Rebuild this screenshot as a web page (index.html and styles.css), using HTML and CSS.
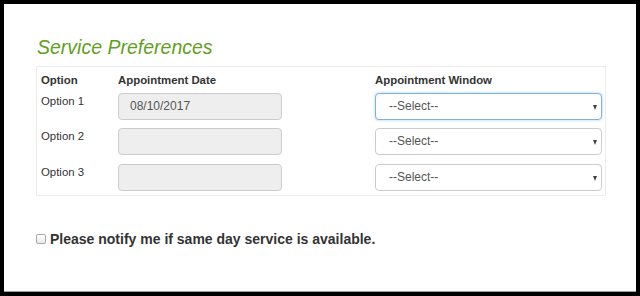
FILE: index.html
```html
<!DOCTYPE html>
<html lang="en">
<head>
<meta charset="utf-8">
<title>Service Preferences</title>
<link rel="stylesheet" href="styles.css">
</head>
<body>
<div class="frame">
  <div class="page">
    <h2 class="title">Service Preferences</h2>
    <div class="prefs">
      <div class="cell head c1">Option</div>
      <div class="cell head c2">Appointment Date</div>
      <div class="cell head c3">Appointment Window</div>

      <div class="cell c1 label">Option 1</div>
      <div class="cell c2"><div class="field">08/10/2017</div></div>
      <div class="cell c3"><div class="select focus"><span class="sel-text">--Select--</span><span class="caret"></span></div></div>

      <div class="cell c1 label">Option 2</div>
      <div class="cell c2"><div class="field"></div></div>
      <div class="cell c3"><div class="select"><span class="sel-text">--Select--</span><span class="caret"></span></div></div>

      <div class="cell c1 label">Option 3</div>
      <div class="cell c2"><div class="field"></div></div>
      <div class="cell c3"><div class="select"><span class="sel-text">--Select--</span><span class="caret"></span></div></div>
    </div>
    <label class="notify"><span class="box"></span>Please notify me if same day service is available.</label>
  </div>
</div>
</body>
</html>
```

FILE: styles.css
```css
html, body {
  margin: 0;
  padding: 0;
  background: #000;
}
.frame {
  box-sizing: border-box;
  width: 640px;
  height: 296px;
  border: 4px solid #000;
  background: #fff;
  font-family: "Liberation Sans", Arial, sans-serif;
  color: #333;
}
.page {
  box-sizing: border-box;
  height: 288px;
  padding: 31px 30px 0 32px;
  border-bottom: 1px solid #9a9a9a;
}
.title {
  margin: 0 0 7px 1px;
  font-size: 19.5px;
  line-height: 24px;
  font-weight: normal;
  font-style: italic;
  color: #5f9f22;
}
.prefs {
  display: grid;
  grid-template-columns: 76px 257px 1fr;
  width: 570px;
  box-sizing: border-box;
  border: 1px solid #ececec;
}
.cell {
  font-size: 11.4px;
  line-height: 17px;
  padding: 4px 3px 4.3px 5px;
}
.c1 { padding-left: 4px; }
.head {
  font-weight: bold;
  padding-top: 5px;
  padding-bottom: 0;
}
.field {
  box-sizing: border-box;
  width: 164px;
  height: 27px;
  border: 1px solid #ccc;
  border-radius: 4px;
  background: #eee;
  color: #555;
  font-size: 12px;
  line-height: 25px;
  padding-left: 11px;
}
.select {
  position: relative;
  box-sizing: border-box;
  width: 227px;
  height: 27px;
  border: 1px solid #ccc;
  border-radius: 4px;
  background: #fff;
  color: #555;
  font-size: 12px;
  line-height: 25px;
  padding-left: 13px;
}
.select.focus {
  border-color: #7eb2dc;
  box-shadow: 0 0 3px rgba(102, 175, 233, 0.6);
}
.caret {
  position: absolute;
  right: 4px;
  top: 11px;
  width: 0;
  height: 0;
  border-left: 2.5px solid transparent;
  border-right: 2.5px solid transparent;
  border-top: 5px solid #444;
}
.notify {
  display: flex;
  align-items: center;
  margin-top: 34px;
  font-size: 14px;
  line-height: 18px;
  font-weight: bold;
  color: #333;
}
.box {
  box-sizing: border-box;
  width: 10px;
  height: 10px;
  margin: 0 4px 0 0;
  border: 1px solid #a8a8a8;
  border-radius: 2px;
  background: linear-gradient(#fff, #e8e8e8);
}
```
